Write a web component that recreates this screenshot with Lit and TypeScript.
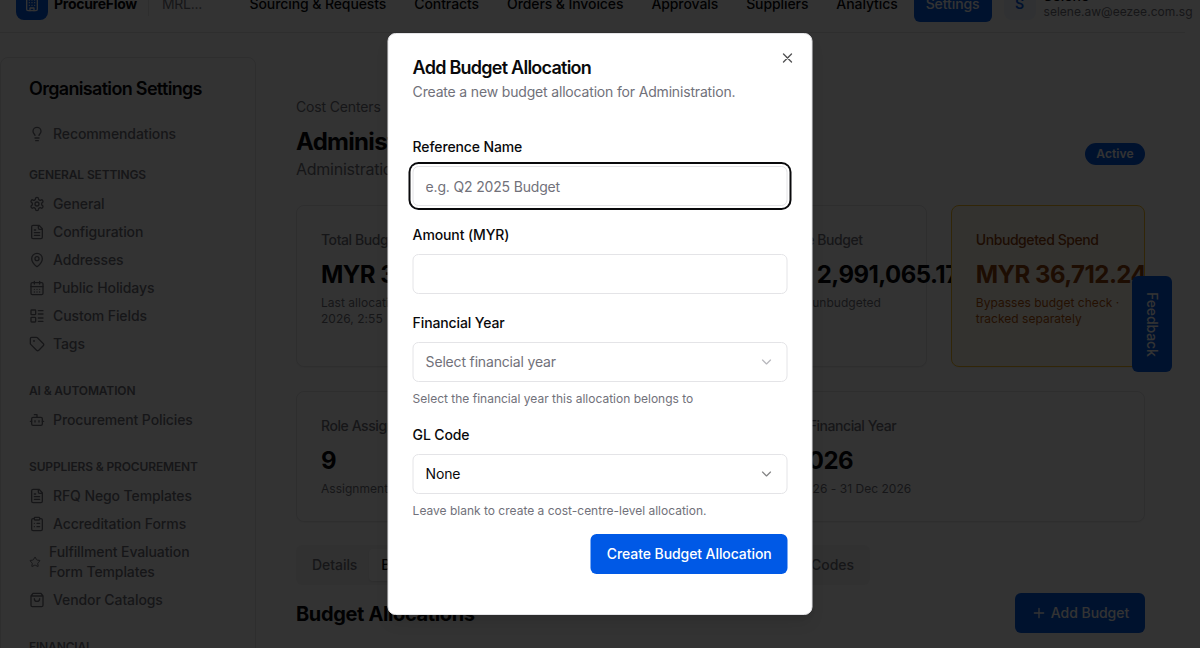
import { LitElement, html, css, svg } from "lit";
import { customElement, property } from "lit/decorators.js";
import { classMap } from "lit/directives/class-map.js";

const ICONS: Record<string, unknown> = {
  building: svg`<rect width="16" height="20" x="4" y="2" rx="2"/><path d="M9 22v-4h6v4M8 6h.01M16 6h.01M12 6h.01M12 10h.01M12 14h.01M16 10h.01M16 14h.01M8 10h.01M8 14h.01"/>`,
  bulb: svg`<path d="M15 14c.2-1 .7-1.7 1.5-2.5 1-.9 1.5-2.2 1.5-3.5A6 6 0 0 0 6 8c0 1 .2 2.2 1.5 3.5.7.7 1.3 1.5 1.5 2.5M9 18h6M10 22h4"/>`,
  gear: svg`<path d="M12.22 2h-.44a2 2 0 0 0-2 2v.18a2 2 0 0 1-1 1.73l-.43.25a2 2 0 0 1-2 0l-.15-.08a2 2 0 0 0-2.73.73l-.22.38a2 2 0 0 0 .73 2.73l.15.1a2 2 0 0 1 1 1.72v.51a2 2 0 0 1-1 1.74l-.15.09a2 2 0 0 0-.73 2.73l.22.38a2 2 0 0 0 2.73.73l.15-.08a2 2 0 0 1 2 0l.43.25a2 2 0 0 1 1 1.73V20a2 2 0 0 0 2 2h.44a2 2 0 0 0 2-2v-.18a2 2 0 0 1 1-1.73l.43-.25a2 2 0 0 1 2 0l.15.08a2 2 0 0 0 2.73-.73l.22-.39a2 2 0 0 0-.73-2.73l-.15-.08a2 2 0 0 1-1-1.74v-.5a2 2 0 0 1 1-1.74l.15-.09a2 2 0 0 0 .73-2.73l-.22-.38a2 2 0 0 0-2.73-.73l-.15.08a2 2 0 0 1-2 0l-.43-.25a2 2 0 0 1-1-1.73V4a2 2 0 0 0-2-2z"/><circle cx="12" cy="12" r="3"/>`,
  file: svg`<path d="M15 2H6a2 2 0 0 0-2 2v16a2 2 0 0 0 2 2h12a2 2 0 0 0 2-2V7ZM14 2v4a2 2 0 0 0 2 2h4M10 9H8M16 13H8M16 17H8"/>`,
  pin: svg`<path d="M20 10c0 4.993-5.539 10.193-7.399 11.799a1 1 0 0 1-1.202 0C9.539 20.193 4 14.993 4 10a8 8 0 0 1 16 0"/><circle cx="12" cy="10" r="3"/>`,
  calendar: svg`<path d="M8 2v4M16 2v4M3 10h18M8 14h.01M12 14h.01M16 14h.01M8 18h.01M12 18h.01M16 18h.01"/><rect width="18" height="18" x="3" y="4" rx="2"/>`,
  layout: svg`<rect width="7" height="7" x="3" y="3" rx="1"/><rect width="7" height="7" x="3" y="14" rx="1"/><path d="M14 4h7M14 9h7M14 15h7M14 20h7"/>`,
  tag: svg`<path d="M12.586 2.586A2 2 0 0 0 11.172 2H4a2 2 0 0 0-2 2v7.172a2 2 0 0 0 .586 1.414l8.704 8.704a2.426 2.426 0 0 0 3.42 0l6.58-6.58a2.426 2.426 0 0 0 0-3.42z"/><circle cx="7.5" cy="7.5" r=".5" fill="currentColor"/>`,
  bot: svg`<path d="M12 8V4H8M2 14h2M20 14h2M15 13v2M9 13v2"/><rect width="16" height="12" x="4" y="8" rx="2"/>`,
  clipboard: svg`<rect width="8" height="4" x="8" y="2" rx="1"/><path d="M16 4h2a2 2 0 0 1 2 2v14a2 2 0 0 1-2 2H6a2 2 0 0 1-2-2V6a2 2 0 0 1 2-2h2M12 11h4M12 16h4M8 11h.01M8 16h.01"/>`,
  star: svg`<path d="M11.525 2.295a.53.53 0 0 1 .95 0l2.31 4.679a2.123 2.123 0 0 0 1.595 1.16l5.166.756a.53.53 0 0 1 .294.904l-3.736 3.638a2.123 2.123 0 0 0-.611 1.878l.882 5.14a.53.53 0 0 1-.771.56l-4.618-2.428a2.122 2.122 0 0 0-1.973 0L6.396 21.01a.53.53 0 0 1-.77-.56l.881-5.139a2.122 2.122 0 0 0-.611-1.879L2.16 9.795a.53.53 0 0 1 .294-.906l5.165-.755a2.122 2.122 0 0 0 1.597-1.16z"/>`,
  bag: svg`<path d="M6 2 3 6v14a2 2 0 0 0 2 2h14a2 2 0 0 0 2-2V6l-3-4ZM3 6h18M16 10a4 4 0 0 1-8 0"/>`,
  plus: svg`<path d="M5 12h14M12 5v14"/>`,
  close: svg`<path d="M18 6 6 18M6 6l12 12"/>`,
  chevron: svg`<path d="m6 9 6 6 6-6"/>`,
};

const icon = (name: string, cls = "") => html`<svg class="icon ${cls}" viewBox="0 0 24 24" fill="none" stroke="currentColor" stroke-linecap="round" stroke-linejoin="round" aria-hidden="true">${ICONS[name]}</svg>`;

const shared = css`
  * { box-sizing: border-box; }
  h1, h2, h3, p { margin: 0; }
  .icon { width: 16px; height: 16px; flex: none; display: block; stroke-width: 2; }
`;

const NAV = ["Sourcing & Requests", "Contracts", "Orders & Invoices", "Approvals", "Suppliers", "Analytics", "Settings"];

@customElement("app-header")
class AppHeader extends LitElement {
  static styles = [shared, css`
    :host { display: block; }
    .bar { height: 57px; display: flex; align-items: center; padding-left: 16px; border-bottom: 1px solid #e4e4e7; width: 1185px; white-space: nowrap; }
    .bar > * { flex: none; }
    .logo { width: 32px; height: 32px; border-radius: 8px; background: #0059e6; color: #fff; display: grid; place-items: center; }
    .brand { margin-left: 6px; width: 94px; font-weight: 700; letter-spacing: -0.27px; }
    .org { border-left: 1px solid #e4e4e7; padding-left: 13px; width: 89.5px; color: #71717a; line-height: 24px; letter-spacing: -0.3px; }
    nav { display: flex; gap: 4px; }
    .item { height: 36px; padding: 0 12px; display: flex; align-items: center; border-radius: 6px; font-weight: 500; letter-spacing: -0.09px; }
    .active { background: #0059e6; color: #fff; }
    .avatar { margin-left: 12px; width: 32px; height: 32px; border-radius: 8px; display: grid; place-items: center; background: #edf3fd; color: #0059e6; font-weight: 600; }
    .who { margin-left: 8px; display: flex; flex-direction: column; padding-bottom: 2px; }
    .name { font-weight: 500; line-height: 17px; }
    .mail { font-size: 12px; line-height: 15px; color: #71717a; letter-spacing: 0.03px; }
  `];
  render() {
    return html`<header class="bar">
      <span class="logo">${icon("building")}</span><span class="brand">ProcureFlow</span><span class="org">MRL...</span>
      <nav>${NAV.map(n => html`<span class=${classMap({ item: true, active: n === "Settings" })}>${n}</span>`)}</nav>
      <span class="avatar">S</span>
      <span class="who"><span class="name">Selene</span><span class="mail">selene.aw@eezee.com.sg</span></span>
    </header>`;
  }
}

const SECTIONS: { title: string; items: [string, string][] }[] = [
  { title: "General Settings", items: [["gear", "General"], ["file", "Configuration"], ["pin", "Addresses"], ["calendar", "Public Holidays"], ["layout", "Custom Fields"], ["tag", "Tags"]] },
  { title: "AI & Automation", items: [["bot", "Procurement Policies"]] },
  { title: "Suppliers & Procurement", items: [["file", "RFQ Nego Templates"], ["clipboard", "Accreditation Forms"], ["star", "Fulfillment Evaluation Form Templates"], ["bag", "Vendor Catalogs"]] },
  { title: "Financial", items: [] },
];

@customElement("settings-sidebar")
class SettingsSidebar extends LitElement {
  static styles = [shared, css`
    :host { display: block; }
    .card { width: 255.5px; height: 700px; border: 1px solid #e4e4e7; border-radius: 8px; background: #fff; padding: 17px 28px 24px; box-shadow: 0 1px 2px rgba(0,0,0,.05); }
    .heading { font-size: 18px; line-height: 28px; font-weight: 600; letter-spacing: -0.68px; margin-bottom: 21px; }
    .row { display: flex; align-items: center; gap: 8px; line-height: 20px; color: #71717a; font-weight: 500; letter-spacing: -0.1px; }
    .group { display: flex; flex-direction: column; gap: 8px; margin-top: 28px; }
    .group.first { margin-top: 22px; }
    .title { font-size: 12px; line-height: 18px; height: 16px; font-weight: 600; color: #71717a; text-transform: uppercase; margin-bottom: 4px; letter-spacing: -0.14px; }
    .small { width: 12px; height: 12px; }
  `];
  render() {
    return html`<aside class="card">
      <h2 class="heading">Organisation Settings</h2>
      <div class="row">${icon("bulb")}<span>Recommendations</span></div>
      ${SECTIONS.map((s, i) => html`<div class=${classMap({ group: true, first: i === 0 })}>
        <div class="title">${s.title}</div>
        ${s.items.map(([ic, t]) => html`<div class="row">${icon(ic, ic === "star" ? "small" : "")}<span>${t}</span></div>`)}
      </div>`)}
    </aside>`;
  }
}

@customElement("stat-card")
class StatCard extends LitElement {
  @property() label = "";
  @property() value = "";
  @property() note = "";
  @property({ type: Boolean }) warn = false;
  static styles = [shared, css`
    :host { display: block; min-width: 0; }
    .card { height: 100%; padding: 24px; border: 1px solid #e4e4e7; border-radius: 8px; background: #fff; box-shadow: 0 1px 2px rgba(0,0,0,.05); position: relative; }
    .label { line-height: 20px; font-weight: 500; color: #71717a; letter-spacing: -0.43px; white-space: nowrap; }
    .value { margin-top: 9px; font-size: 24px; line-height: 32px; font-weight: 700; white-space: nowrap; letter-spacing: -0.54px; }
    .note { margin-top: 4px; font-size: 12px; line-height: 16px; color: #71717a; letter-spacing: 0.03px; }
    .warn { background: #fffbeb; border-color: #fbbf24; }
    .warn .label, .warn .value { color: #92400e; }
    .warn .note { color: #b45309; }
  `];
  render() {
    return html`<div class=${classMap({ card: true, warn: this.warn })}>
      <div class="label">${this.label}</div><div class="value">${this.value}</div><div class="note">${this.note}</div>
    </div>`;
  }
}

@customElement("cost-center-page")
class CostCenterPage extends LitElement {
  static styles = [shared, css`
    :host { display: block; width: 849px; }
    .crumb { line-height: 20px; color: #71717a; letter-spacing: -0.15px; }
    .top { display: flex; justify-content: space-between; align-items: center; margin-top: 9px; height: 56px; }
    .name { font-size: 24px; line-height: 32px; font-weight: 700; letter-spacing: -0.7px; }
    .sub { font-size: 16px; line-height: 22px; height: 24px; color: #71717a; letter-spacing: -0.25px; }
    .badge { height: 22px; width: 60px; display: flex; align-items: center; justify-content: center; border-radius: 11px; background: #0059e6; color: #fff; font-size: 12px; font-weight: 600; letter-spacing: 0.1px; }
    .four { display: grid; grid-template-columns: repeat(4, 1fr); gap: 24px; height: 162px; margin-top: 23px; }
    .two { display: grid; grid-template-columns: repeat(2, 1fr); gap: 24px; height: 130px; margin-top: 24px; }
    .tabs { display: flex; width: 574px; height: 40px; padding: 4px; margin-top: 24px; border-radius: 6px; background: #f4f4f5; color: #71717a; font-weight: 500; letter-spacing: -0.05px; white-space: nowrap; }
    .tab { display: flex; align-items: center; padding: 0 12px; border-radius: 4px; }
    .tab:last-child { margin-left: auto; }
    .on { background: #fff; color: #09090b; box-shadow: 0 1px 2px rgba(0,0,0,.1); }
    .foot { display: flex; justify-content: space-between; align-items: center; margin-top: 8px; height: 40px; }
    .section { font-size: 20px; line-height: 28px; padding-top: 2px; font-weight: 650; letter-spacing: -0.36px; }
    .btn { height: 40px; width: 130px; border-radius: 6px; display: flex; align-items: center; justify-content: center; gap: 4px; background: #0059e6; color: #fff; font-weight: 500; letter-spacing: -0.05px; }
  `];
  render() {
    return html`
      <div class="crumb">Cost Centers</div>
      <div class="top"><div><h1 class="name">Administration</h1><p class="sub">Administration</p></div><span class="badge">Active</span></div>
      <div class="four">
        <stat-card label="Total Budget" value="MYR 3,027,777" note="Last allocation: 6 Jan 2026, 2:55"></stat-card>
        <stat-card label="Used Budget" value="MYR 0.00" note="0% of total"></stat-card>
        <stat-card label="Available Budget" value="MYR 2,991,065.17" note="Excludes unbudgeted"></stat-card>
        <stat-card warn label="Unbudgeted Spend" value="MYR 36,712.24" note="Bypasses budget check · tracked separately"></stat-card>
      </div>
      <div class="two">
        <stat-card label="Role Assignments" value="9" note="Assignments"></stat-card>
        <stat-card label="Current Financial Year" value="FY 2026" note="01 Jan 2026 - 31 Dec 2026"></stat-card>
      </div>
      <div class="tabs"><span class="tab">Details</span><span class="tab on">Budget Allocations</span><span class="tab">Role Assignments</span><span class="tab">GL Codes</span></div>
      <div class="foot"><h2 class="section">Budget Allocations</h2><span class="btn">${icon("plus")}Add Budget</span></div>`;
  }
}

@customElement("allocation-dialog")
class AllocationDialog extends LitElement {
  static styles = [shared, css`
    :host { display: block; transform: translateX(-0.5px); }
    .dialog { position: relative; width: 425px; height: 582px; padding: 20px 24px; border: 1px solid #e4e4e7; border-radius: 8px; background: #fff; box-shadow: 0 10px 15px -3px rgba(0,0,0,.1), 0 4px 6px -4px rgba(0,0,0,.1); }
    .close { position: absolute; top: 16px; right: 16px; opacity: .7; }
    .title { font-size: 18px; line-height: 28px; font-weight: 600; letter-spacing: -0.75px; padding-left: 0.6px; }
    .desc { line-height: 20px; color: #71717a; letter-spacing: -0.17px; padding-left: 0.6px; }
    .form { margin-top: 34px; display: flex; flex-direction: column; gap: 18px; }
    .label { display: block; line-height: 22px; font-weight: 500; margin-bottom: 8px; letter-spacing: -0.12px; padding-left: 0.6px; }
    .control { display: flex; align-items: center; justify-content: space-between; width: 100%; height: 40px; padding: 0 12px 0 12.6px; border: 1px solid #e4e4e7; border-radius: 6px; background: #fff; font: inherit; letter-spacing: -0.17px; color: inherit; outline: none; }
    .control::placeholder { color: #71717a; opacity: 1; }
    .focus { box-shadow: 0 0 0 2px #fff, 0 0 0 4px #09090b; }
    .control.muted { color: #71717a; }
    .chev { opacity: .5; color: #09090b; stroke-width: 1.75; }
    .muted .chev { color: #71717a; }
    .help { font-size: 12px; line-height: 18px; height: 16px; color: #71717a; margin-top: 8px; padding-left: 0.6px; }
    .actions { display: flex; justify-content: flex-end; margin-top: -2px; }
    .submit { height: 40px; padding: 0 15.4px 0 16.6px; border: 0; border-radius: 6px; background: #0059e6; color: #fff; font: inherit; letter-spacing: -0.08px; font-weight: 500; }
  `];
  render() {
    return html`<section class="dialog" role="dialog">
      <h2 class="title">Add Budget Allocation</h2>
      <p class="desc">Create a new budget allocation for Administration.</p>
      <div class="form">
        <div><label class="label">Reference Name</label><input class="control focus" placeholder="e.g. Q2 2025 Budget"></div>
        <div><label class="label">Amount (MYR)</label><input class="control"></div>
        <div><label class="label">Financial Year</label><div class="control muted">Select financial year${icon("chevron", "chev")}</div><p class="help">Select the financial year this allocation belongs to</p></div>
        <div><label class="label">GL Code</label><div class="control">None${icon("chevron", "chev")}</div><p class="help">Leave blank to create a cost-centre-level allocation.</p></div>
        <div class="actions"><button class="submit">Create Budget Allocation</button></div>
      </div>
      <span class="close">${icon("close")}</span>
    </section>`;
  }
}

@customElement("app-root")
class AppRoot extends LitElement {
  static styles = [shared, css`
    :host { display: block; position: relative; width: 1200px; height: 648px; overflow: hidden; font: 14px/20px Inter, "Liberation Sans", sans-serif; letter-spacing: 0; color: #09090b; background: #fff; }
    .page { margin-top: -24px; }
    .body { display: flex; gap: 40.5px; align-items: flex-start; padding-top: 24px; }
    .main { padding-top: 40px; }
    .feedback { position: absolute; left: 1132px; top: 276px; width: 40px; height: 96px; padding-right: 1px; border-radius: 6px; background: #0059e6; color: #fff; font-weight: 500; letter-spacing: -0.1px; writing-mode: vertical-rl; display: flex; align-items: center; justify-content: center; }
    .overlay { position: absolute; inset: 0; background: rgba(0,0,0,.8); display: flex; justify-content: center; align-items: center; }
  `];
  render() {
    return html`
      <div class="page"><app-header></app-header>
        <div class="body"><settings-sidebar></settings-sidebar><cost-center-page class="main"></cost-center-page></div></div>
      <div class="feedback">Feedback</div>
      <div class="overlay"><allocation-dialog></allocation-dialog></div>`;
  }
}
